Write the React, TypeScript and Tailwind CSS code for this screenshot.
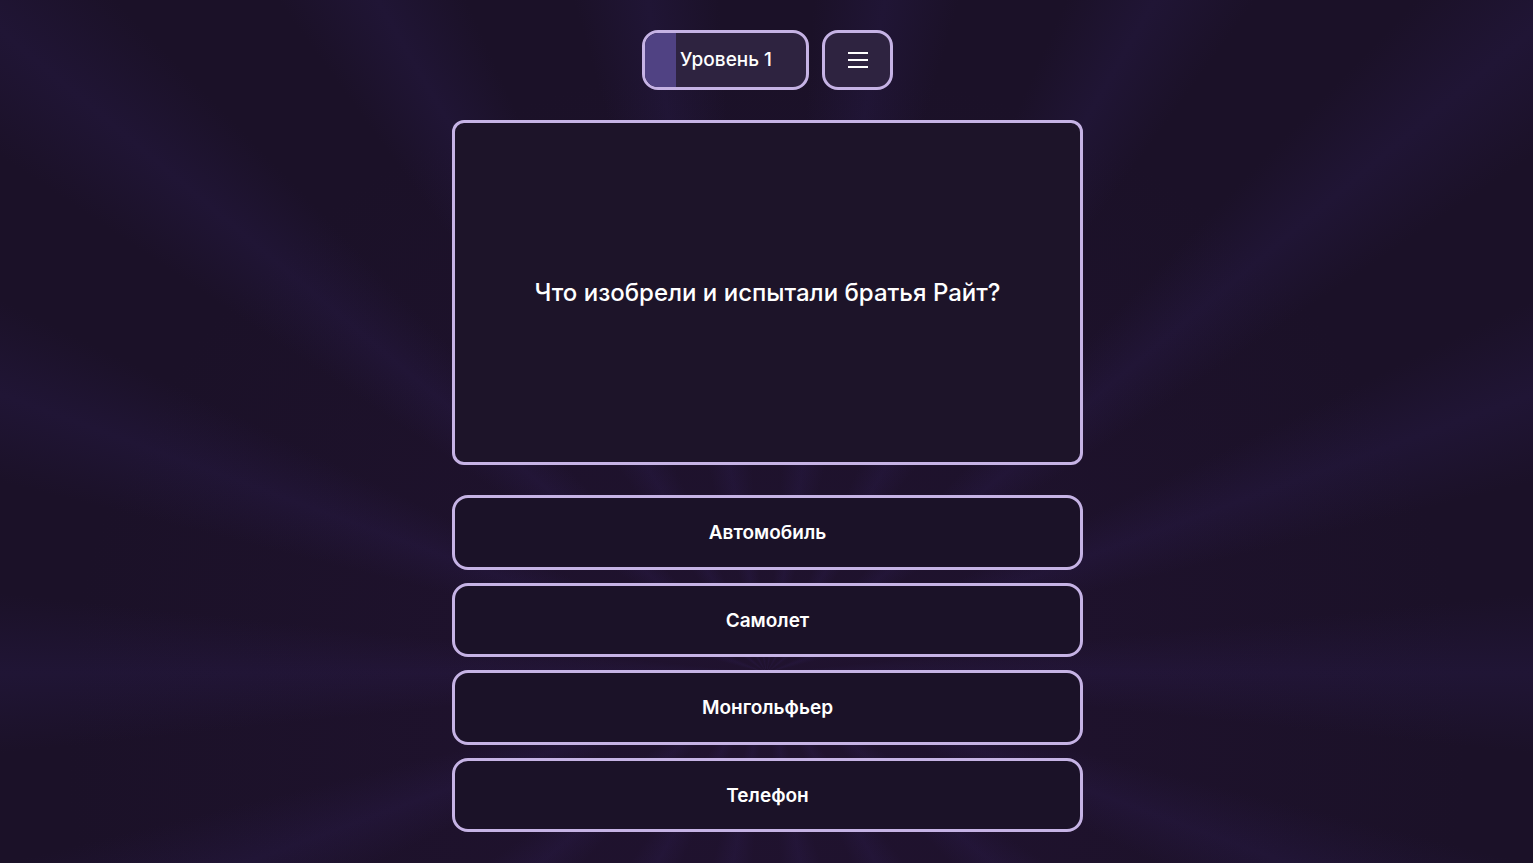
const answers = ['Автомобиль', 'Самолет', 'Монгольфьер', 'Телефон']

export default function App() {
  return (
    <div className="relative min-h-screen overflow-hidden bg-[#1c1229] font-['Inter',sans-serif] text-white">
      <div className="pointer-events-none absolute inset-0 bg-[repeating-conic-gradient(from_0deg_at_50%_78%,#1b1128_0deg,#1b1128_4deg,#201535_10deg,#1b1128_16deg,#1b1128_20deg)]" />
      <div className="pointer-events-none absolute inset-0 bg-[radial-gradient(ellipse_at_50%_85%,rgba(45,22,65,0.3),transparent_65%)]" />

      <div className="relative flex flex-col items-center pt-[30px] pl-[2px]">
        <div className="flex gap-[13px]">
          <div className="relative flex h-[60px] w-[167px] items-center overflow-hidden rounded-2xl border-[3px] border-[#c6b3e5] bg-[#2e2340]">
            <div className="h-full w-[31px] bg-[#504283]" />
            <span className="pl-[4px] text-[19px] font-medium">Уровень 1</span>
          </div>
          <button
            type="button"
            className="flex h-[60px] w-[71px] flex-col items-center justify-center gap-[5px] rounded-2xl border-[3px] border-[#c6b3e5] bg-[#2e2340]"
          >
            <span className="h-[2px] w-5 bg-white" />
            <span className="h-[2px] w-5 bg-white" />
            <span className="h-[2px] w-5 bg-white" />
          </button>
        </div>

        <div className="mt-[30px] flex h-[345px] w-[631px] items-center justify-center rounded-xl border-[3px] border-[#c6b3e5] bg-[#1d1429] px-8">
          <p className="text-[24px] font-medium">Что изобрели и испытали братья Райт?</p>
        </div>

        <div className="mt-[30px] flex w-[631px] flex-col gap-[13px]">
          {answers.map((a) => (
            <button
              key={a}
              type="button"
              className="flex h-[74.5px] items-center justify-center rounded-2xl border-[3px] border-[#c6b3e5] bg-[#1b1228] pt-[2px] text-[19px] font-semibold"
            >
              {a}
            </button>
          ))}
        </div>
      </div>
    </div>
  )
}
